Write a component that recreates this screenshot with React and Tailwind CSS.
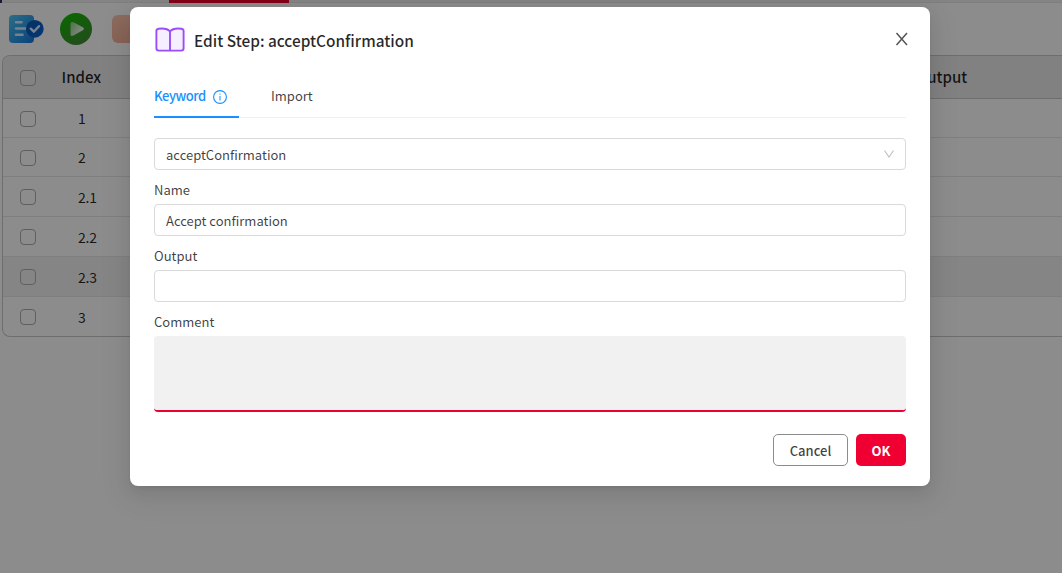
import React from 'react';

const rows = [
  { index: '1', size: 'h-[39px]' },
  { index: '2', size: 'h-[39px]' },
  { index: '2.1', size: 'h-[40px]' },
  { index: '2.2', size: 'h-[40px]' },
  { index: '2.3', size: 'h-[40px] bg-[#f2f2f2]' },
  { index: '3', size: 'h-[39px] border-b-0' },
];

function Checkbox() {
  return <span className="size-4 shrink-0 rounded-[4px] border border-[#adadad] bg-white/10" />;
}

function TaskIcon() {
  return (
    <svg width="36" height="30" viewBox="0 0 36 30" fill="none">
      <defs>
        <linearGradient id="doc" x1="0" y1="0" x2="1" y2="1">
          <stop stopColor="#4fc8f8" />
          <stop offset="1" stopColor="#1477df" />
        </linearGradient>
        <linearGradient id="badge" x1="0" y1="0" x2="1" y2="1">
          <stop stopColor="#075bb5" />
          <stop offset="1" stopColor="#0b62d8" />
        </linearGradient>
      </defs>
      <rect x="1" y="1" width="25" height="28" rx="4" fill="url(#doc)" />
      <path d="M8 8.2h5.500M8 14.500h11M8 20.800h6.500" stroke="#d5efff" strokeWidth="2.600" strokeLinecap="round" />
      <circle cx="26.800" cy="14.800" r="8.900" fill="url(#badge)" />
      <path d="m22.800 14.700 3 3 5.200-5.500" stroke="#e4efff" strokeWidth="2.400" strokeLinecap="round" strokeLinejoin="round" />
    </svg>
  );
}

function RunIcon() {
  return (
    <svg width="32" height="32" viewBox="0 0 32 32">
      <defs>
        <linearGradient id="run" x1="0.2" y1="0" x2="0.7" y2="1">
          <stop stopColor="#12bd00" />
          <stop offset="1" stopColor="#418b35" />
        </linearGradient>
        <linearGradient id="play" x1="0" y1="0.1" x2="1" y2="0.7">
          <stop stopColor="#8fd188" />
          <stop offset="1" stopColor="#ffffff" />
        </linearGradient>
      </defs>
      <circle cx="16" cy="16" r="16" fill="url(#run)" />
      <path d="M10.500 11q0-3 3-1.700l9.300 5q2.200 1.500 0 3l-9.300 5.300q-3 1.200-3-1.600z" fill="url(#play)" />
    </svg>
  );
}

function BookIcon() {
  return (
    <svg width="30" height="26" viewBox="0 0 30 26" fill="#f6efff" stroke="#9b4dfa" strokeWidth="1.900" strokeLinejoin="round">
      <path d="M15 4.500C12.500 1.600 7 1.300 3.500 1.800Q1.400 2.200 1.400 4v17.300q0 2.300 2.400 2.300h22.400q2.400 0 2.400-2.300V4q0-1.800-2.100-2.200C23 1.300 17.500 1.600 15 4.500Z" />
      <path d="M15 4.500V24" />
    </svg>
  );
}

function Page() {
  return (
    <div className="flex h-full flex-col bg-white text-black/85">
      <div className="flex h-[3px] shrink-0 border-b border-[#e8e8e8] bg-[#f0f0f0] pl-[169px]">
        <span className="h-[3px] w-[120px] shrink-0 bg-[#f00032]" />
      </div>
      <div className="flex h-[52px] shrink-0 items-center pl-2">
        <TaskIcon />
        <span className="ml-4"><RunIcon /></span>
        <span className="ml-5 h-7 w-9 rounded-[6px] bg-gradient-to-b from-[#ffc5ae] to-[#f7b29b]" />
      </div>
      <div className="ml-[2px] flex h-[282px] shrink-0 flex-col overflow-hidden rounded-l-lg border border-r-0 border-[#c9c9c9]">
        <div className="flex h-[43px] shrink-0 items-center border-b border-[#c9c9c9] bg-[#ececec] pl-[17px] text-[15px] font-medium">
          <span className="flex pt-px"><Checkbox /></span>
          <span className="ml-[25.5px] w-[854.500px]">Index</span>
          <span>Output</span>
        </div>
        {rows.map((row) => (
          <div key={row.index} className={`flex shrink-0 items-center border-b border-[#e8e8e8] pl-[17px] text-[14px] ${row.size}`}>
            <span className="flex pt-px"><Checkbox /></span>
            <span className="ml-[42px] pt-px tracking-[-0.2px]">{row.index}</span>
          </div>
        ))}
      </div>
    </div>
  );
}

export default function App() {
  return (
    <div className="relative h-[573px] w-[1062px] overflow-hidden font-['Noto_Sans_CJK_SC','Noto_Sans',sans-serif]">
      <Page />
      <div className="absolute inset-0 bg-black/45 px-[130px] pt-[7px]">
        <span className="absolute left-0 top-0 h-[3px] w-[2px] border border-[#201830] bg-white" />
        <div className="flex h-[479px] w-[800px] flex-col rounded-lg bg-white px-6 pb-5 text-[13px] leading-[22px] text-black/75 shadow-[0_3px_6px_-4px_rgba(0,0,0,0.12),0_6px_16px_0_rgba(0,0,0,0.08),0_9px_28px_8px_rgba(0,0,0,0.05)]">
          <header className="flex h-[66px] shrink-0 items-center">
            <span className="ml-px"><BookIcon /></span>
            <h1 className="ml-[9px] pb-px text-[15.4px] font-medium text-black/85">Edit Step: acceptConfirmation</h1>
            <svg className="ml-auto mr-[-2px] mb-[2px]" width="13" height="14" viewBox="0 0 13 14" fill="none" stroke="#555" strokeWidth="1.500">
              <path d="m1.500 1 10.500 12M12 1 1.500 13" />
            </svg>
          </header>
          <nav className="flex h-[45px] shrink-0 border-b border-[#f0f0f0]">
            <div className="mb-[-1px] flex w-[85px] items-center border-b-2 border-[#1890ff] pt-[3px] font-medium text-[#1890ff]">
              <span className="w-[51px] tracking-[-0.45px]">Keyword</span>
              <svg className="ml-2 mt-[2px]" width="14" height="14" viewBox="0 0 14 14" fill="none" stroke="currentColor">
                <circle cx="7" cy="7" r="6.400" strokeWidth="1.100" />
                <path d="M7 6v4.500M7 3.500v1.200" />
              </svg>
            </div>
            <div className="ml-8 flex items-center pt-[2px]">Import</div>
          </nav>
          <div className="mt-5 flex h-8 shrink-0 items-center rounded border border-[#d9d9d9] px-[11px]">
            <span className="pt-px">acceptConfirmation</span>
            <svg className="ml-auto mr-[-1px]" width="12" height="12" viewBox="0 0 12 12" fill="none" stroke="#bfbfbf" strokeWidth="1.100">
              <path d="m1.500 2.500 4.500 6.500 4.500-6.500" />
            </svg>
          </div>
          <label className="mt-[9px] h-[25px] shrink-0">Name</label>
          <div className="flex h-8 shrink-0 items-center rounded border border-[#d9d9d9] px-[11px] pt-px">Accept confirmation</div>
          <label className="mt-[9px] h-[25px] shrink-0">Output</label>
          <div className="h-8 shrink-0 rounded border border-[#d9d9d9]" />
          <label className="mt-[9px] h-[25px] shrink-0">Comment</label>
          <div className="h-[76px] shrink-0 rounded border-b-2 border-[#f00032] bg-[#f1f1f1]" />
          <footer className="mt-auto flex h-8 shrink-0 justify-end gap-2">
            <button className="flex w-[75px] items-center justify-center rounded-[5px] border border-[#8c8c8c] pt-px font-medium">Cancel</button>
            <button className="flex w-[50px] items-center justify-center rounded-[5px] bg-[#f00032] pt-px font-bold text-white">OK</button>
          </footer>
        </div>
      </div>
    </div>
  );
}
